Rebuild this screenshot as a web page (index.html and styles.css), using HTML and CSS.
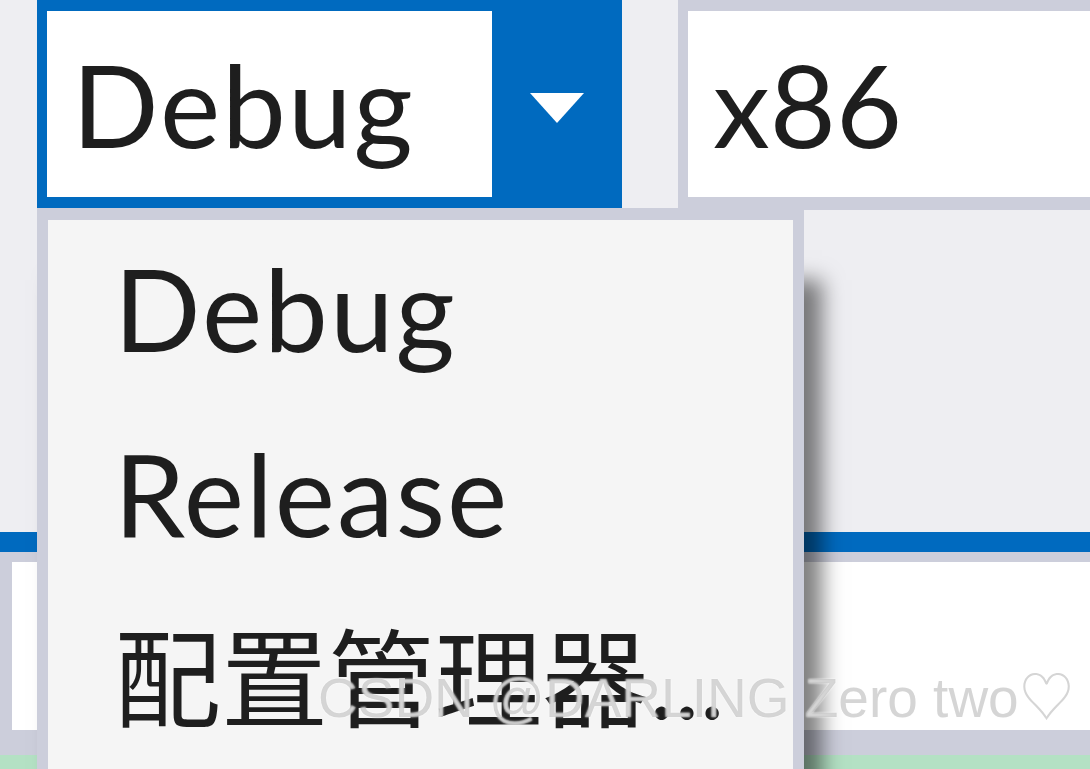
FILE: index.html
```html
<!DOCTYPE html>
<html lang="zh-CN">
<head>
    <meta charset="UTF-8">
    <meta name="viewport" content="width=device-width, initial-scale=1.0">
    <title>解决方案配置</title>
    <link rel="stylesheet" href="styles.css">
</head>
<body>

<div class="toolbar">
    <div class="combo combo-active">
        <span class="combo-text">Debug</span>
        <span class="combo-btn">
            <svg width="54" height="30" viewBox="0 0 54 30"><polygon points="0,0 54,0 27,30" fill="#fff"/></svg>
        </span>
    </div>
    <div class="combo combo-platform">
        <span class="combo-text">x86</span>
    </div>
</div>

<div class="workspace"></div>
<div class="tab-line"></div>
<div class="panel">
    <div class="panel-field"></div>
</div>
<div class="statusbar"></div>

<ul class="dropdown">
    <li>Debug</li>
    <li>Release</li>
    <li class="item-cjk">配置管理器...</li>
</ul>

<div class="watermark">CSDN @DARLING Zero two♡</div>

</body>
</html>
```

FILE: styles.css
```css
body {
    margin: 0;
    width: 1090px;
    height: 769px;
    overflow: hidden;
    position: relative;
    background-color: #eeeef2;
    font-family: "Lato", "Noto Sans CJK SC", sans-serif;
    color: #1e1e1e;
}
.toolbar {
    display: flex;
    align-items: flex-start;
    height: 210px;
    padding-left: 37px;
}
.combo {
    display: flex;
    box-sizing: border-box;
    background-color: #fff;
    font-size: 114px;
}
.combo-text {
    display: block;
    line-height: 186px;
    padding-left: 25px;
}
.combo-active {
    width: 585px;
    height: 208px;
    border: 11px solid #006abf;
    border-left-width: 10px;
    border-right: none;
}
.combo-active .combo-text {
    width: 445px;
    box-sizing: border-box;
    letter-spacing: 2px;
}
.combo-btn {
    display: flex;
    align-items: center;
    justify-content: center;
    width: 130px;
    padding-top: 8px;
    box-sizing: border-box;
    background-color: #006abf;
}
.combo-platform {
    flex: 1;
    height: 210px;
    margin-left: 56px;
    border: 11px solid #cccedb;
    border-left-width: 10px;
    border-bottom-width: 13px;
    border-right: none;
}
.workspace {
    height: 322px;
}
.tab-line {
    height: 20px;
    background-color: #006abf;
}
.panel {
    padding: 10px 0 25px 12px;
    background-color: #cccedb;
}
.panel-field {
    height: 168px;
    background-color: #fff;
}
.statusbar {
    height: 40px;
    background-color: #b4e1c4;
}
.dropdown {
    position: absolute;
    top: 208px;
    left: 37px;
    width: 767px;
    height: 640px;
    box-sizing: border-box;
    margin: 0;
    padding: 0;
    list-style: none;
    background-color: #f5f5f5;
    border: 11px solid #cccedb;
    border-top-width: 12px;
    box-shadow: 18px 72px 20px rgba(0, 0, 0, 0.5);
    font-size: 114px;
}
.dropdown li {
    line-height: 175px;
    padding-bottom: 10px;
    padding-left: 66px;
    letter-spacing: 2px;
}
.dropdown .item-cjk {
    font-size: 107px;
    letter-spacing: 0;
}
.watermark {
    position: absolute;
    top: 666px;
    left: 318px;
    font-family: "Liberation Sans", sans-serif;
    font-size: 55px;
    line-height: 64px;
    white-space: nowrap;
    color: rgba(150, 150, 150, 0.4);
    text-shadow: 0 0 2px #fff;
}
```
